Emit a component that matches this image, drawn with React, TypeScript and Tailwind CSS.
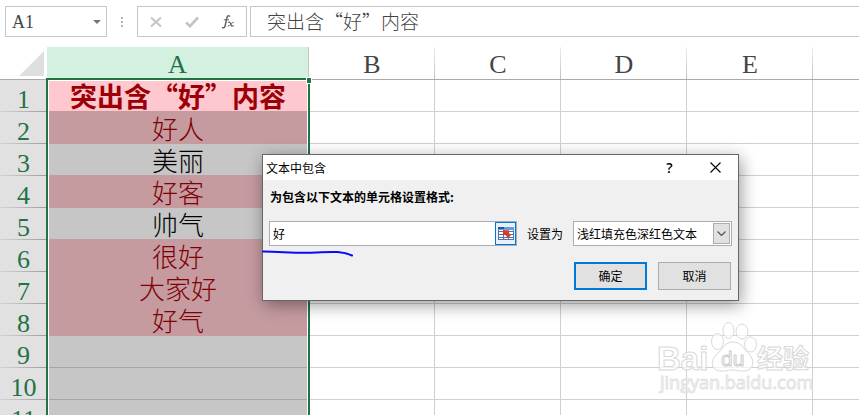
import React, { useState } from 'react';
import clsx from 'clsx';

type Row = { id: number; text: string; hit: boolean };

const rows: Row[] = [
  { id: 1, text: '突出含“好”内容', hit: true },
  { id: 2, text: '好人', hit: true },
  { id: 3, text: '美丽', hit: false },
  { id: 4, text: '好客', hit: true },
  { id: 5, text: '帅气', hit: false },
  { id: 6, text: '很好', hit: true },
  { id: 7, text: '大家好', hit: true },
  { id: 8, text: '好气', hit: true },
  { id: 9, text: '', hit: false },
  { id: 10, text: '', hit: false },
  { id: 11, text: '', hit: false },
];

const columns = ['B', 'C', 'D', 'E'];

function FormulaBar() {
  return (
    <div className="flex h-[31px] pl-[5px] text-[#444]">
      {/* Name box */}
      <button className="flex w-[102px] items-center justify-between border border-[#c6c6c6] pr-[5px] pl-[6px] font-['Liberation_Serif',serif] text-lg">
        A1
        <svg className="h-1 w-2" viewBox="0 0 8 4" fill="#777">
          <path d="M0 0h8L4 4z" />
        </svg>
      </button>
      <div className="flex w-[30px] flex-col items-center justify-center gap-[2px]">
        <span className="h-[2px] w-[2px] bg-[#b4b4b4]" />
        <span className="h-[2px] w-[2px] bg-[#b4b4b4]" />
        <span className="h-[2px] w-[2px] bg-[#b4b4b4]" />
      </div>
      <div className="flex w-[110px] items-center justify-between border border-[#c6c6c6] px-3">
        <button aria-label="取消输入">
          <svg className="h-3 w-3" viewBox="0 0 12 12" fill="none" stroke="#c4c4c4" strokeWidth="2">
            <path d="M1 1.5l10 9M11 1.5l-10 9" />
          </svg>
        </button>
        <button aria-label="输入">
          <svg className="h-3 w-[14px]" viewBox="0 0 14 12" fill="none" stroke="#c4c4c4" strokeWidth="2.6">
            <path d="M1 6.5l4 3.7L13 1.5" />
          </svg>
        </button>
        <button aria-label="插入函数">
          <svg className="h-[14px] w-3" viewBox="0 0 12 14" fill="none" stroke="#666" strokeLinecap="round">
            <path d="M7.5 1.2C6 .2 5.2 1.2 4.8 3L3.2 10.500C2.800 12.300 1.800 13.300.6 12.600" strokeWidth="1.500" />
            <path d="M2.200 4.800h4.500" />
            <path d="M6.500 7.300c1.500-.8 1.800.4 2.300 2s1 2.300 2.500 1.500" strokeWidth="1.300" />
            <path d="M11.500 7.200c-1.500 0-3.500 4-5.500 4" />
          </svg>
        </button>
      </div>
      <input
        aria-label="编辑栏"
        defaultValue="突出含“好”内容"
        className="ml-[3px] min-w-0 flex-1 border border-r-0 border-[#c6c6c6] px-4 font-['Noto_Sans_CJK_SC',sans-serif] text-[19px] font-light outline-none"
      />
    </div>
  );
}

function Sheet() {
  return (
    <div className="relative mt-[10px]">
      <table className="w-full table-fixed border-separate border-spacing-0">
        <colgroup>
          <col className="w-[47px]" />
          <col className="w-[262px]" />
          <col className="w-[126px]" />
          <col className="w-[126px]" />
          <col className="w-[126px]" />
          <col className="w-[126px]" />
          <col />
        </colgroup>
        <thead>
          <tr className="h-[33px] font-['Liberation_Serif',serif] text-[26px] leading-6 text-[#444]">
            <th className="border-b border-[#ababab] p-0">
              <svg className="ml-[19px] h-[25px] w-[25px]" viewBox="0 0 25 25" fill="#dfdfdf">
                <path d="M25 0v25H0z" />
              </svg>
            </th>
            <th className="border-r border-b border-[#c6c6c6] bg-[#d3f0e0] p-0 pt-1 font-normal text-[#217346]">A</th>
            {columns.map((name) => (
              <th
                key={name}
                className="border-b border-[#ababab] bg-[linear-gradient(#f0f0f0,#c0c0c0)] bg-[length:1px_100%] bg-right bg-no-repeat p-0 pt-1 font-normal"
              >
                {name}
              </th>
            ))}
            <th className="border-b border-[#ababab] p-0" />
          </tr>
        </thead>
        <tbody>
          {rows.map((row, i) => (
            <tr key={row.id} className="h-8">
              <th
                scope="row"
                className="bg-[#e1e1e1] bg-[linear-gradient(to_right,#d4d4d4,#9c9c9c)] bg-[length:100%_1px] bg-bottom bg-no-repeat p-0 align-bottom font-['Liberation_Serif',serif] text-[26px] leading-6 font-normal text-[#217346]"
              >
                {row.id}
              </th>
              <td
                className={clsx(
                  "border-b p-0 text-center font-['Noto_Sans_CJK_SC',sans-serif] leading-7",
                  i === 0 ? 'bg-[#ffc7ce] text-[27px] font-semibold' : 'text-[26px] font-light',
                  i > 0 && row.hit && 'bg-[#c59ba0]',
                  !row.hit && 'bg-[#c6c6c6]',
                  !row.hit && 'text-black',
                  row.hit && (i === 0 ? 'text-[#9c0006]' : 'text-[#800006]'),
                  i < 8 ? 'border-[#c59ba0]' : 'border-[#a6a6a6]'
                )}
              >
                {row.text}
              </td>
              {[...columns, ''].map((name) => (
                <td
                  key={name}
                  className={clsx('border-b border-[#d0d0d0] p-0', name && 'border-r')}
                />
              ))}
            </tr>
          ))}
        </tbody>
      </table>

      {/* Selection frame of column A */}
      <div className="pointer-events-none absolute top-[31px] -bottom-1 left-[46px] w-[264px] border-2 border-[#217346] shadow-[inset_0_0_0_1px_#fff]" />
      <div className="absolute top-[30px] left-[306px] h-[7px] w-[6px] border border-white bg-[#217346]" />
    </div>
  );
}

function RangeIcon() {
  return (
    <svg className="h-[13px] w-4" viewBox="0 0 16 13">
      <rect width="16" height="13" fill="#fff" />
      <rect width="16" height="3" fill="#6f9ad8" />
      <rect width="6" height="2" fill="#27539b" />
      <path d="M0 4.5h16M0 7.5h16M0 10.5h16M.5 3v10M5.5 3v10M10.5 3v10M15.5 3v10M0 12.5h16" stroke="#5273ad" fill="none" />
      <path d="M5 3l6 .5-1 1.500L13 8 10 11 7 7.500 5 9z" fill="#d83a26" />
    </svg>
  );
}

function RuleDialog() {
  const [text, setText] = useState('好');

  return (
    <div
      role="dialog"
      aria-labelledby="dialog-title"
      className="absolute top-[154px] left-[262px] w-[477px] border border-[#666] bg-[#f0f0f0] font-['Noto_Sans_CJK_SC',sans-serif] text-xs text-black shadow-[2px_4px_16px_rgba(0,0,0,0.4)]"
    >
      <div className="flex h-[25px] items-center bg-white pl-[3px]">
        <h2 id="dialog-title" className="flex-1">文本中包含</h2>
        <button aria-label="帮助" className="w-[45px] font-['Open_Sans',sans-serif] text-sm font-semibold">?</button>
        <button aria-label="关闭" className="flex w-[46px] justify-center">
          <svg className="h-[11px] w-[11px]" viewBox="0 0 11 11" stroke="#000" strokeWidth="1.1">
            <path d="M.5.5l10 10M10.5.5l-10 10" />
          </svg>
        </button>
      </div>

      <form className="px-[6px] pt-[9px] pb-[10px]" onSubmit={(e) => e.preventDefault()}>
        <label htmlFor="rule-text" className="block pl-px leading-4 font-bold">
          为包含以下文本的单元格设置格式:
        </label>

        <div className="mt-4 flex h-[25px] items-center">
          <div className="flex h-full w-[248px] border border-[#abadb3] bg-white">
            <input
              id="rule-text"
              value={text}
              onChange={(e) => setText(e.target.value)}
              className="min-w-0 flex-1 px-[3px] outline-none"
            />
            <button
              type="button"
              aria-label="选择区域"
              className="flex w-[21px] items-center justify-center border border-[#0078d7] bg-[#e5f1fb]"
            >
              <RangeIcon />
            </button>
          </div>
          <label htmlFor="rule-format" className="w-14 text-center">设置为</label>
          <div className="relative h-full w-[159px]">
            <select
              id="rule-format"
              className="h-full w-full appearance-none border border-[#abadb3] bg-white pl-[3px] outline-none"
            >
              <option>浅红填充色深红色文本</option>
            </select>
            <span className="pointer-events-none absolute top-[2px] right-[2px] flex h-[21px] w-[17px] items-center justify-center border border-[#adadad] bg-[#e1e1e1]">
              <svg className="h-[5px] w-[9px]" viewBox="0 0 9 5" fill="none" stroke="#555" strokeWidth="1.2">
                <path d="M.5.5l4 4 4-4" />
              </svg>
            </span>
          </div>
        </div>

        <div className="mt-4 flex justify-end gap-[11px] pr-px">
          <button type="submit" className="h-7 w-[73px] border-2 border-[#0078d7] bg-[#e1e1e1]">确定</button>
          <button type="button" className="h-7 w-[73px] border border-[#adadad] bg-[#e1e1e1]">取消</button>
        </div>
      </form>

      {/* Pen mark under the text box */}
      <svg className="absolute top-[94px] -left-px h-2 w-[92px]" viewBox="0 0 92 8" fill="none" stroke="#0a0af5" strokeWidth="2" strokeLinecap="round">
        <path d="M1 2.5C18 2.5 28 4 46 3.8S78 .8 90 6.5" />
      </svg>
    </div>
  );
}

function Watermark() {
  return (
    <svg
      className="absolute right-[43px] bottom-[14px] h-[82px] w-[160px]"
      viewBox="0 0 160 82"
      fill="#fff"
      fillOpacity="0.7"
      stroke="#d8d8d8"
      strokeWidth="1"
      strokeLinejoin="round"
    >
      <text x="1" y="51" fontSize="33" fontWeight="bold" fontFamily="'Liberation Sans', sans-serif">Bai</text>
      <ellipse cx="61.5" cy="22.5" rx="6" ry="8" />
      <ellipse cx="72.5" cy="11.5" rx="5.5" ry="8" />
      <ellipse cx="86" cy="12.5" rx="6" ry="7.5" />
      <ellipse cx="94.5" cy="25.5" rx="6" ry="7.5" />
      <path d="M77 23c8 0 11 7 16 12 6 6 5 16-4 17-5 .5-8-1-13-1s-8 2-13 1c-9-2-8-12-2-17 6-5 8-12 16-12z" />
      <text x="65" y="47" fontSize="21" fontFamily="'Liberation Sans', sans-serif" stroke="#cdcdcd">du</text>
      <text x="101" y="49" fontSize="26" fontWeight="bold" fontFamily="'Noto Sans CJK SC', sans-serif">经验</text>
      <text x="4" y="70" fontSize="18" fontFamily="'Open Sans', sans-serif" stroke="#e2e2e2">
        jingyan.baidu.com
      </text>
    </svg>
  );
}

export default function App() {
  return (
    <main className="relative h-screen overflow-hidden bg-white pt-[6px]">
      <FormulaBar />
      <Sheet />
      <Watermark />
      <RuleDialog />
    </main>
  );
}
